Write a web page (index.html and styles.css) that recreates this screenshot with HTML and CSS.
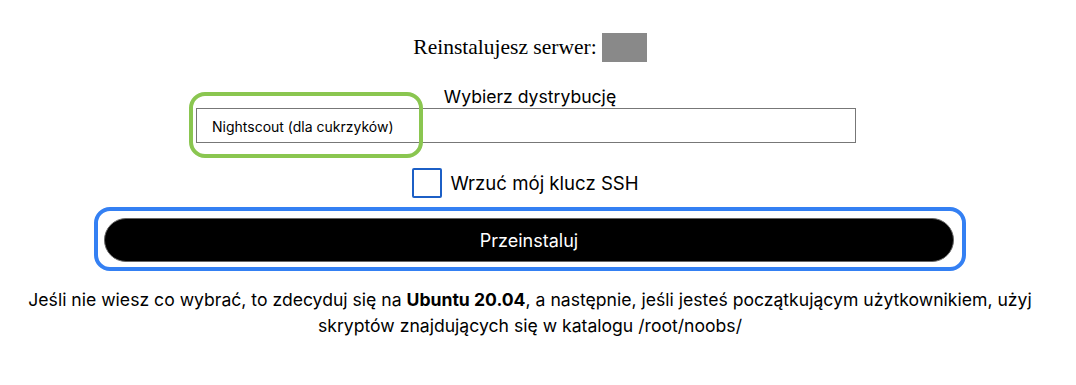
FILE: index.html
```html
<!DOCTYPE html>
<html lang="pl">
<head>
    <meta charset="UTF-8">
    <meta name="viewport" content="width=device-width, initial-scale=1.0">
    <title>Reinstalacja serwera</title>
    <link rel="stylesheet" href="styles.css">
</head>
<body>
    <div class="container">
        <h2 class="title">Reinstalujesz serwer: <span class="server-name"></span></h2>

        <label class="distro-label" for="distro">Wybierz dystrybucję</label>
        <div class="select-wrap">
            <div class="select" id="distro">Nightscout (dla cukrzyków)</div>
            <div class="mark-green"></div>
        </div>

        <label class="ssh-row">
            <span class="checkbox"></span>
            <span>Wrzuć mój klucz SSH</span>
        </label>

        <div class="mark-blue">
            <button class="reinstall-btn">Przeinstaluj</button>
        </div>

        <p class="hint">Jeśli nie wiesz co wybrać, to zdecyduj się na <b>Ubuntu 20.04</b>, a następnie, jeśli jesteś początkującym użytkownikiem, użyj skryptów znajdujących się w katalogu /root/noobs/</p>
    </div>
</body>
</html>
```

FILE: styles.css
```css
body {
    margin: 0;
    background: #fff;
    color: #000;
    font-family: Inter, "Liberation Sans", Arial, sans-serif;
}
.container {
    width: 1044px;
    margin-left: 8px;
    padding-top: 32px;
    display: flex;
    flex-direction: column;
    align-items: center;
}
.title {
    margin: 0;
    font-family: "Liberation Serif", "Times New Roman", serif;
    font-weight: normal;
    font-size: 21.5px;
    line-height: 30px;
    display: flex;
    align-items: center;
    gap: 5px;
}
.server-name {
    display: inline-block;
    width: 45px;
    height: 29px;
    background: #898989;
}
.distro-label {
    margin-top: 24px;
    font-size: 17.6px;
    line-height: 22px;
}
.select-wrap {
    position: relative;
    margin-left: -8px;
}
.select {
    width: 643px;
    height: 33px;
    border: 1px solid #777;
    padding-left: 15px;
    font-size: 14px;
    line-height: 35px;
}
.mark-green {
    position: absolute;
    left: -7px;
    top: -16px;
    width: 226px;
    height: 58px;
    border: 4px solid #8ac650;
    border-radius: 16px;
}
.ssh-row {
    margin-top: 25px;
    margin-left: -9px;
    display: flex;
    align-items: center;
    gap: 8px;
    font-size: 18.6px;
    line-height: 30px;
}
.checkbox {
    width: 26px;
    height: 26px;
    border: 2px solid #1c5fc6;
    border-radius: 2px;
}
.mark-blue {
    margin-top: 9px;
    border: 4px solid #3480f3;
    border-radius: 16px;
    padding: 7px 8px 5px 6px;
}
.reinstall-btn {
    display: block;
    width: 850px;
    height: 44px;
    border: 1px solid #666;
    border-radius: 22px;
    background: #000;
    color: #fff;
    font-family: Inter, "Liberation Sans", Arial, sans-serif;
    font-size: 18px;
}
.hint {
    margin: 16px 0 0;
    width: 1030px;
    text-align: center;
    font-size: 17.6px;
    line-height: 26px;
}
```
